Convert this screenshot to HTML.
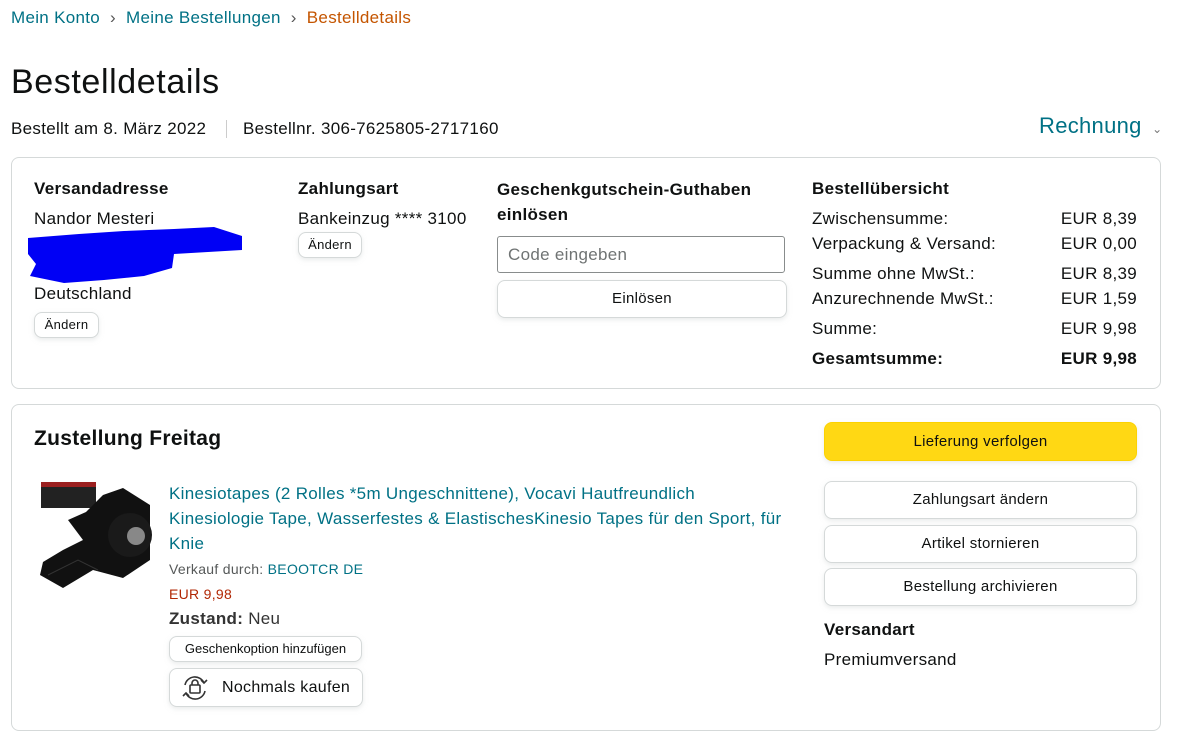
<!DOCTYPE html>
<html><head><meta charset="utf-8"><style>
*{box-sizing:border-box;margin:0;padding:0}
body{width:1184px;height:744px;background:#fff;font-family:"Liberation Sans",Arial,sans-serif;color:#0f1111;position:relative;overflow:hidden;letter-spacing:0.3px}
.a{position:absolute;white-space:nowrap}
.t{font-size:17px}
.b{font-weight:bold}
.link{color:#007185}
.card{position:absolute;border:1px solid #d5d9d9;border-radius:8px}
.btn{position:absolute;border:1px solid #d5d9d9;border-radius:8px;background:#fff;box-shadow:0 2px 5px rgba(213,217,217,.5);font-size:15px;text-align:center}
</style></head><body>
<div class="a" style="left:11px;top:8px;font-size:17px"><span class="link">Mein Konto</span> <span style="color:#555;margin:0 5px">›</span> <span class="link">Meine Bestellungen</span> <span style="color:#555;margin:0 5px">›</span> <span style="color:#c45500">Bestelldetails</span></div>
<div class="a" style="left:11px;top:63px;font-size:34px;letter-spacing:0.6px">Bestelldetails</div>
<div class="a t" style="left:11px;top:119px">Bestellt am 8. März 2022</div>
<div class="a" style="left:226px;top:120px;width:1px;height:18px;background:#ccc"></div>
<div class="a t" style="left:243px;top:119px">Bestellnr. 306-7625805-2717160</div>
<div class="a link" style="left:1039px;top:113px;font-size:22px">Rechnung <span style="font-size:12px;color:#777;margin-left:4px">⌄</span></div>

<div class="card" style="left:11px;top:157px;width:1150px;height:232px"></div>
<div class="a t b" style="left:34px;top:179px">Versandadresse</div>
<div class="a t" style="left:34px;top:209px">Nandor Mesteri</div>
<svg class="a" style="left:24px;top:224px" width="222" height="62"><path d="M4 14 L55 10 L100 7 L150 5 L190 3 L218 12 L218 26 L150 30 L148 44 L120 52 L80 56 L40 59 L6 52 L12 40 L4 30 Z" fill="#0000f5"/></svg>
<div class="a t" style="left:34px;top:284px">Deutschland</div>
<div class="btn" style="left:34px;top:312px;width:65px;height:26px;line-height:24px;font-size:13px">Ändern</div>
<div class="a t b" style="left:298px;top:179px">Zahlungsart</div>
<div class="a t" style="left:298px;top:209px">Bankeinzug **** 3100</div>
<div class="btn" style="left:298px;top:232px;width:64px;height:26px;line-height:24px;font-size:13px">Ändern</div>
<div class="a t b" style="left:497px;top:177px;line-height:25px">Geschenkgutschein-Guthaben<br>einlösen</div>
<div class="a" style="left:497px;top:236px;width:288px;height:37px;border:1px solid #888c8c;border-radius:3px;font-size:17px;color:#6f7373;padding:8px 10px">Code eingeben</div>
<div class="btn" style="left:497px;top:280px;width:290px;height:38px;line-height:36px">Einlösen</div>
<div class="a t b" style="left:812px;top:179px">Bestellübersicht</div>
<div class="a t" style="left:812px;top:206px;width:325px;line-height:25px">
<div style="display:flex;justify-content:space-between"><span>Zwischensumme:</span><span>EUR 8,39</span></div>
<div style="display:flex;justify-content:space-between"><span>Verpackung &amp; Versand:</span><span>EUR 0,00</span></div>
<div style="display:flex;justify-content:space-between;margin-top:5px"><span>Summe ohne MwSt.:</span><span>EUR 8,39</span></div>
<div style="display:flex;justify-content:space-between"><span>Anzurechnende MwSt.:</span><span>EUR 1,59</span></div>
<div style="display:flex;justify-content:space-between;margin-top:5px"><span>Summe:</span><span>EUR 9,98</span></div>
<div style="display:flex;justify-content:space-between;margin-top:5px;font-weight:bold"><span>Gesamtsumme:</span><span>EUR 9,98</span></div>
</div>

<div class="card" style="left:11px;top:404px;width:1150px;height:327px"></div>
<div class="a b" style="left:34px;top:427px;font-size:21px">Zustellung Freitag</div>
<svg class="a" style="left:38px;top:480px" width="115" height="112">
<rect x="3" y="2" width="55" height="26" fill="#222"/><rect x="3" y="2" width="55" height="5" fill="#9b2020"/>
<path d="M48 32 L30 40 L45 60 L25 70 L5 82 L2 95 L25 108 L55 90 L85 98 L112 80 L112 25 L85 8 L65 15 Z" fill="#111"/>
<path d="M10 95 L40 80 L60 90" stroke="#333" fill="none"/>
<circle cx="92" cy="55" r="22" fill="#1a1a1a"/><circle cx="98" cy="56" r="9" fill="#888"/>
</svg>
<div class="a link" style="left:169px;top:481px;font-size:17px;line-height:25px">Kinesiotapes (2 Rolles *5m Ungeschnittene), Vocavi Hautfreundlich<br>Kinesiologie Tape, Wasserfestes &amp; ElastischesKinesio Tapes für den Sport, für<br>Knie</div>
<div class="a" style="left:169px;top:561px;font-size:14px;color:#565959">Verkauf durch: <span class="link">BEOOTCR DE</span></div>
<div class="a" style="left:169px;top:586px;font-size:14px;color:#b12704">EUR 9,98</div>
<div class="a t" style="left:169px;top:609px;color:#333"><b>Zustand:</b> Neu</div>
<div class="btn" style="left:169px;top:636px;width:193px;height:26px;line-height:24px;font-size:13px;letter-spacing:0">Geschenkoption hinzufügen</div>
<div class="btn" style="left:169px;top:668px;width:194px;height:39px;line-height:37px;font-size:16px;text-align:left;padding-left:52px">Nochmals kaufen</div>
<svg class="a" style="left:180px;top:673px" width="30" height="30" fill="none" stroke="#333" stroke-width="1.6"><path d="M5 12 A10 10 0 0 1 24 10"/><path d="M25 18 A10 10 0 0 1 6 20"/><path d="M21 7 L24 10 L27 7"/><path d="M3 23 L6 20 L9 23"/><rect x="10" y="12" width="10" height="8" rx="1"/><path d="M12 12 V10 a3 3 0 0 1 6 0 V12"/></svg>

<div class="btn" style="left:824px;top:422px;width:313px;height:39px;line-height:37px;background:#ffd814;border-color:#fcd200">Lieferung verfolgen</div>
<div class="btn" style="left:824px;top:481px;width:313px;height:38px;line-height:36px">Zahlungsart ändern</div>
<div class="btn" style="left:824px;top:525px;width:313px;height:38px;line-height:36px">Artikel stornieren</div>
<div class="btn" style="left:824px;top:568px;width:313px;height:38px;line-height:36px">Bestellung archivieren</div>
<div class="a t b" style="left:824px;top:620px">Versandart</div>
<div class="a t" style="left:824px;top:650px">Premiumversand</div>
</body></html>
